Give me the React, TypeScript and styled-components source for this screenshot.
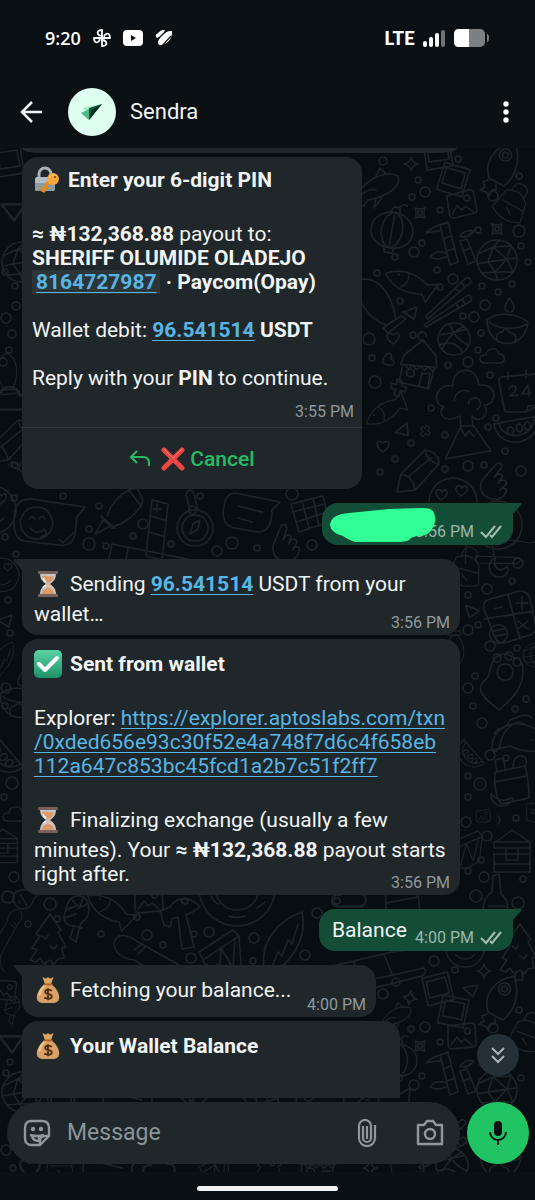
import React from "react";
import styled, { createGlobalStyle, css } from "styled-components";

const GlobalStyle = createGlobalStyle`
  * { box-sizing: border-box; }
  html, body { margin: 0; background: #0a1014; }
  body { font-family: Roboto, "Noto Sans", sans-serif; color: #f1f4f5; }
  button, input { font: inherit; color: inherit; background: none; border: 0; padding: 0; margin: 0; }
  button { cursor: pointer; display: flex; align-items: center; justify-content: center; }
  svg { display: block; }
`;

const Page = styled.div`
  display: flex;
  flex-direction: column;
  height: 100vh;
  background: #0a1014;
`;

const StatusBar = styled.div`
  display: flex;
  align-items: center;
  justify-content: space-between;
  height: 76px;
  flex: none;
  padding: 0 45px;
  color: #fff;
`;

const StatusGroup = styled.div<{ $gap: number }>`
  display: flex;
  align-items: center;
  gap: ${(p) => p.$gap}px;
`;

const Clock = styled.span`
  font: 600 18px/24px "Open Sans", sans-serif;
`;

const Network = styled.span`
  font: 900 19px/24px Lato, sans-serif;
`;

const Header = styled.header`
  display: flex;
  align-items: center;
  height: 72px;
  flex: none;
  padding: 0 17px 0 20px;
`;

const Avatar = styled.div`
  width: 48px;
  height: 48px;
  margin: 0 14px 0 24px;
  border-radius: 50%;
  background: #dffff0;
  overflow: hidden;
`;

const ContactName = styled.h1`
  flex: 1;
  margin: 0;
  font-size: 22px;
  line-height: 28px;
  font-weight: 400;
`;

const Chat = styled.main`
  position: relative;
  display: flex;
  flex-direction: column;
  flex: 1;
  min-height: 0;
`;

const WallpaperSvg = styled.svg`
  position: absolute;
  inset: 0;
  width: 100%;
  height: 100%;
`;

const MessageList = styled.div`
  position: relative;
  display: flex;
  flex-direction: column;
  align-items: flex-start;
  flex: 1;
  min-height: 0;
  padding: 0 22px;
  overflow-y: auto;
  scrollbar-width: none;
`;

const Earlier = styled.div`
  flex: none;
  width: 435px;
  max-width: 100%;
  height: 5px;
  border-radius: 0 0 16px 16px / 0 0 5px 5px;
  background: #1f272a;
`;

const BubbleBox = styled.article<{ $out?: boolean; $width: number; $grouped?: boolean; $tail?: boolean }>`
  position: relative;
  flex: none;
  width: ${(p) => p.$width}px;
  max-width: 100%;
  margin-top: ${(p) => (p.$grouped ? 4 : 14)}px;
  border-radius: 16px;
  background: #1f272a;
  font-size: 21px;
  line-height: 24px;
  ${(p) => p.$tail && !p.$out && css`border-top-left-radius: 0;`}
  ${(p) =>
    p.$out &&
    css`
      align-self: flex-end;
      background: #144d37;
      border-top-right-radius: 0;
    `}
`;

const TailSvg = styled.svg<{ $out?: boolean }>`
  position: absolute;
  top: 0;
  ${(p) => (p.$out ? "right: -9px;" : "left: -9px;")}
`;

const Content = styled.div`
  display: grid;
  padding: 7px 10px 2px 12px;
  > * { grid-area: 1 / 1; }
`;

const Body = styled.div`
  padding-bottom: 7px;
`;

const Stacked = styled.div`
  display: flex;
  flex-direction: column;
  padding: 5px 8px 5px 10px;
`;

const Line = styled.p`
  margin: 0;
  min-height: 24px;
  overflow-wrap: anywhere;
`;

const OutRow = styled.div`
  display: flex;
  align-items: center;
  justify-content: flex-end;
  height: 42px;
  padding: 0 11px 0 13px;
`;

const OutText = styled.span`
  flex: 1;
`;

const Time = styled.time<{ $spaced?: boolean }>`
  align-self: end;
  justify-self: end;
  color: #8f999d;
  font-size: 16px;
  line-height: 20px;
  ${(p) => p.$spaced && "margin-top: 12px;"}
`;

const OutMeta = styled.span`
  display: flex;
  align-items: center;
  gap: 6px;
  padding-top: 15px;
  time { color: #9bb8ac; }
`;

const Link = styled.a`
  color: #57b6e6;
  text-decoration: underline;
  text-decoration-thickness: 1px;
  text-underline-offset: 3px;
`;

const Chip = styled.span`
  padding: 0 4px;
  background: #2c3538;
`;

const EmojiSlot = styled.span<{ $gap: number }>`
  display: inline-flex;
  align-items: center;
  width: 28px;
  height: 36px;
  margin-right: ${(p) => p.$gap}px;
  vertical-align: -7px;
`;

const CancelButton = styled.button`
  width: 100%;
  height: 62px;
  gap: 5px;
  border-top: 1px solid #323b3e;
  color: #25bd63;
  font-size: 21px;
  font-weight: 500;
  svg:first-child { margin-right: 5px; }
`;

const Scribble = styled.svg`
  position: absolute;
  left: 7px;
  top: 4px;
`;

const ComposerRow = styled.form`
  position: relative;
  display: flex;
  gap: 7px;
  flex: none;
  padding: 4px 6px 8px 7px;
`;

const Pill = styled.div`
  display: flex;
  align-items: center;
  flex: 1;
  min-width: 0;
  height: 62px;
  padding: 0 16px;
  border-radius: 31px;
  background: #1f272a;
  color: #8f999d;
`;

const MessageInput = styled.input`
  flex: 1;
  min-width: 0;
  margin: 0 16px;
  font-size: 23px;
  line-height: 28px;
  outline: 0;
  &::placeholder { color: #8b9599; opacity: 1; }
`;

const PillButton = styled.button<{ $spaced?: boolean }>`
  width: 28px;
  height: 28px;
  flex: none;
  margin-right: ${(p) => (p.$spaced ? 35 : 0)}px;
`;

const MicButton = styled.button`
  width: 62px;
  height: 62px;
  flex: none;
  border-radius: 50%;
  background: #21c463;
`;

const JumpButton = styled.button`
  position: absolute;
  right: 16px;
  bottom: 96px;
  width: 42px;
  height: 42px;
  border-radius: 50%;
  background: #242f36;
`;

const GestureArea = styled.footer`
  display: flex;
  justify-content: center;
  flex: none;
  height: 28px;
  padding-top: 14px;
`;

const GestureBar = styled.div`
  width: 141px;
  height: 5px;
  border-radius: 3px;
  background: #f2f4f5;
`;

/* ---------- wallpaper ---------- */

const shapes: Record<string, string> = {
  rocket: "M-13 12C-18-4-8-20 13-24C20-4 12 12 2 20ZM-13 12L2 20M-14 14l-5 2 2 5-5 3 6 2 3 4 3-6 4 0 0-6M3-17a6 6 0 1 0 1 0M3-14a3 3 0 1 0 1 0",
  photo: "M-14-13L12-17L16 11L-10 15ZM-10-9L9-12L12 4L-8 7Z",
  image: "M-13-10L10-13Q14-13 14-9L15 7Q15 11 11 11L-9 13Q-12 13-13 9ZM-10 9l6-8 4 5 4-3 7 6M6-8a3 3 0 1 0 1 0",
  globe: "M0-20a20 20 0 1 0 .1 0M-19-6L-4-13L14-14M-20 4L-9 2L10-1L20-2M-15 13L-2 12L16 12M-4-13L-9 2L-2 12L1 20M3-20L-4-13M14-14L10-1L16 12M-4-13L10-1L-2 12",
  ball: "M0-16a16 16 0 1 0 .1 0M-15-4Q0-6 13-10M-12 10Q-4-6 10-13M-4-15Q0 0 15 6M-14 6Q0 0 9 13",
  sticks: "M-24 18L16-20Q21-21 21-16L-22 21ZM-26 27L18-3Q22-2 21 3L-24 29ZM5-10l5 4M11-16l4 5M6 5l3 5M12 1l3 5",
  volcano: "M-22 44L-5 12H8L24 38ZM-5 12V2M7 12V2M-6 2C-24 10-28-6-20-8C-36-14-24-34-11-28C-10-50 16-48 15-28C34-30 34-8 20-8C26 6 10 10 7 2M-10-14a10 10 0 0 1 15-8M4-10a6 6 0 1 1 8 6M-5 14l4 8 4-5 5 6",
  calendar: "M-17-15L16-18Q19-18 19-15L21 13L8 20L-10 20Q-14 20-14 16L-19-10Q-20-14-17-15M-10-20v7M8-22v7M8 20L10 14L21 13M-9-3q4-6 7-1q0 4-6 8l8-1M11 4l-1-11-6 9 9-1",
  house: "M-20 4L-17-6L0-22L14-8L16 4ZM-18 4L-20 22L10 26L14 4M-10 8a4 4 0 1 0 1 0M0 24L2 11h8l-1 14M-1-22a4 4 0 1 1 4-4M-16 4l4 4 4-4 4 4 4-4 4 4 4-4 4 4 4-4",
  lantern: "M0-18C-28-16-28 18 0 18C28 18 28-16 0-18ZM0-18C-14-14-14 14 0 18M0-18C14-14 14 14 0 18M0-18V18M-5 18l1 5h8l1-5M-4-18l2-5h6l1 5M3-23q4-6 8-3",
  bowl: "M-20-6C-20 24 18 26 21-4C8-14-10-14-20-6ZM-18-4C-8 4 10 4 20-2M-9 16q-4-9 4-10q4-6 8 1q8 0 5 10M1-14C-6-18 0-22 2-28C8-22 8-16 4-14",
  cloud: "M-9 6c-6-1-5-9 2-8c1-8 12-8 13-1c7-1 7 9 1 9Z",
  star: "M0-7Q1-1 7 0Q1 1 0 7Q-1 1-7 0Q-1-1 0-7Z",
  spark: "M-5-5Q0-3 5-5Q3 0 5 5Q0 3-5 5Q-3 0-5-5ZM-2-2h4v4h-4Z",
  tri: "M-7 0L7-5L4 7Z",
  heart: "M0 6C-10-1-6-8 0-3C6-8 10-1 0 6Z",
  cross: "M-3-8h5l1 5h5v5h-5v6h-5v-6h-5v-5h5Z",
  melon: "M-22-6L22-14C26 14-16 24-22-6ZM-17-6C-12 12 18 8 18-12M-6-3a3 4 0 1 0 1 0M3-6a3 4 0 1 0 1 0M11-8a3 4 0 1 0 1 0",
  pencil: "M-20 22L-16 4L8-20Q22-18 22-6L-2 20ZM-16 4Q-4 6-2 20M8-20Q10-8 22-6M-8 6L14-12",
  bamboo: "M-12-20l8-3 10 40-8 3ZM-9-6l8-3M-5 6l8-3M8-4l7-2 9 22-8 3ZM11 6l7-3M-12-20q-8 2-14 8q8-2 14-2M8-8q4-8 14-6q-4 6-12 6M-6 8q-10-4-16 4q8 4 16 0M22-14l-8 6",
  whale: "M-26 14C-20-10 4-20 18-14C22 0 0 8-12 10L-16 16ZM-4-14l4-8 6 6M-4 8l-2 10 8-10M-18 4q8-6 14-4",
  surf: "M0-26C20-26 28 0 26 20L16 24C6 18-14-4 0-26M12 26l20-8 4 4-20 10Z",
  smile: "M-34-14Q-32-26-18-26L36-18L28-8L26 8Q24 22 10 20L-26 16Q-38 12-34-14ZM-13-18a16 16 0 1 0 1 0M-20-6q3-5 6 0M-10-6q3-5 6 0M-19 3q8 8 14 1l3 5-6 3M10 14l4 4 8-8M16 16l8-8",
  pen: "M-24 20L-16 6L-8 12ZM-16 6l-2-4 14 12-4 0M-12 2Q-6-16 10-24L22-8Q10 8-4 12M10-24l8-2 6 12-2 6",
  cardgrid: "M-10-28L6-24L0 32L-16 28ZM-12-12L3-8M-14 4L1 8M-5-24v8M-9-19h8M-50 16L40 34M-50 16l-4 20M-34 20l-3 18M20 30l-2 8",
  compass: "M0-14a18 18 0 1 0 .1 0M0-9a13 13 0 1 0 .1 0M-5 10L-2 0L5-4L3 5ZM-5-14l-4-16q4-8 8 0l4 16M-3-18a4 4 0 1 0 1 0",
  note: "M-26-8Q-24-24-10-20L30-12L22-4Q22 18 8 18L-16 14Q-30 10-26-8M-12-8L12-2M-12 4L2 8",
  choc: "M-18-10L14-18L20 8L-10 18ZM-17-2L16-10M-12 8L18-2M-7-13L0 14M4-16L10 12",
  hand: "M-12 4L-4-16Q0-20 2-14L-2-2M-2-2q4-8 8-4l-2 8M4 0q6-6 8 0l-4 8M8 6q8-4 6 4C10 24-14 22-12 4",
  hearts: "M0-24a24 24 0 1 0 .1 0M-12-2C-22-10-14-16-11-10C-6-16-2-8-12-2ZM8-6C-2-14 6-20 9-14C14-20 18-12 8-6ZM-12 8q12 12 24 0",
  moon: "M2-10C-10-10-12 8 2 10Q10 10 10 2C0 6-4-2 2-10Z",
  calc: "M-18-18L12-26Q20-26 22-18L28 10Q28 16 22 18L-4 26Q-12 26-14 18L-24-8Q-26-16-18-18ZM0-22L12 22M-24 2L26-6M-14-8l8-2M8-14h12M14-20v12M10 4l10 8M20 4l-10 8M-10 8a9 9 0 1 0 1 0M-14 14l10-2M-12 19l10-2",
  ray: "M0 28C-18 14-22 8-16 0C-8-4-10-16-4-24Q6-32 14-24Q24-26 24-10C24 6 12 18 0 28ZM6-18a8 8 0 1 0 .1 0M-2-28a4 4 0 1 0 .1 0M10-30a4 4 0 1 0 .1 0M18-24a4 4 0 1 0 .1 0",
  taco: "M-26 12C-28-16 10-26 30 4L26 12Q8 16-8 8ZM-26 12q4 4 8-4C-16-10 0-20 6-14M14 2h1M18 8h1M22 2h1M-24-4q4-6 8-6t8-8q6-2 10-4q8-2 12 2",
  pack: "M-14-12L16-18Q20-4 20 14L-8 20Q-16 8-14-12ZM-14-2L18-8M-12-12l-2-12 8-2 2 10M4-16q0-12 8-12t4 12M-18 14q8 14 20 4q4-4 0-4q-10 6-20-4Z",
  cabin: "M-16-8L0-20L18-8M-18-8h36v6h-36ZM-18-2h36v6h-36M-18 4v10h36V4M-18 14v8h36v-8M-6-2h12v12H-6ZM-14-26q4-4 0-8",
  tree: "M0-26L-14-6l4 2L-18 8l5 2-7 10 6 2 4-4 4 6 6-4 4 4 4-5 6-1L12 8l4-1L8-8l3-2ZM-4 22l-1 8h8l-1-8M-8-4l4 3 2-4M0 6l4 3 3-4",
  shrimp: "M-20-8C-18-26 0-26 2-14C6 2-6 2-6 8L-10 24L-16 20L-12 8C-22 8-24 0-20-8M-20-8l10-4M-22 0l12-4M-14-18l6 6M-2-22l-4 10M2-14l-10 4M-12 8l8 2",
  hammer: "M-20-14L-16 0L-10 2L-8-6L-2-8L2 24L14 22L6-10L14-14L20-18C10-30-4-28-10-18Z",
  board: "M-34-8C-32-20-20-18-10-10L40 18Q60 24 70 12M-34-8Q-32 6-14 8L30 34M-10 2l8-8M-14-2l8-6",
  drum: "M-22 2L12-20L18-14L-18 10ZM-18 10L-10 28M18-14L20 16M-14 14L-2 26L0-2L12 18L14-10M-10 28q16 6 30-12",
  leaf: "M-20 26C-24 0-6-22 18-30C24-2 6 22-16 34ZM-16 34L-6 10L-2 14L4-2L8 2L14-18",
  table: "M-60 6L8-10M8-10L50-16L58-22M-30 0l6 30M0-8l8 20M-14 18L40 6Q44 10 38 14L-10 26Z",
  plate: "M0-38a38 38 0 1 0 .1 0M0-22a22 22 0 1 0 .1 0M-26 8q4 8 8 8M-8 28q8 3 16 0M20 20l8-6",
  fish: "M-26 4Q-8-16 20-8L30-14L28 10L20 4Q-6 18-26 4M-14-2h2M-4-9q6 8 0 18",
  flask: "M-4-24L2-26L4-6Q16 4 6 16Q-8 22-14 10Q-14-2-5-8ZM-8 6h16M-2 12h3",
  kettle: "M-16-12Q0-24 14-10L20 14Q0 26-20 14ZM-10-16q0-16 14-12q8 4 4 14M-14 0h30M-4 6l8 6",
};

type Doodle = [name: string, x: number, y: number, rotate?: number, scale?: number];

const doodles: Doodle[] = [
  ["photo", 437, 155], ["photo", 452, 180, 25], ["rocket", 502, 166], ["image", 461, 204, -8], ["whale", 380, 190, 0, 1],
  ["lantern", 392, 230, 10], ["bamboo", 452, 245], ["globe", 497, 260], ["star", 411, 164], ["spark", 420, 213], ["spark", 497, 229],
  ["kettle", 512, 205, 30, 0.8], ["surf", 366, 305, -12, 1], ["fish", 408, 282, 30, 0.9], ["sticks", 450, 298], ["tri", 410, 312],
  ["bowl", 507, 326], ["ball", 454, 339], ["heart", 393, 338], ["house", 421, 362, 5], ["cloud", 493, 357], ["heart", 388, 360, 70],
  ["volcano", 465, 414, -3], ["cross", 398, 388, 15], ["calendar", 518, 392], ["melon", 516, 430], ["fish", 384, 412, -25, 0.8],
  ["tri", 402, 430, -20], ["heart", 383, 446], ["pencil", 417, 470], ["hand", 495, 480, 20], ["cross", 425, 431, 40, 0.7],
  ["smile", 49, 525], ["pen", 119, 514], ["cardgrid", 162, 528], ["compass", 195, 524], ["note", 250, 514], ["choc", 309, 514],
  ["hand", 285, 542], ["hearts", 453, 502], ["table", 490, 545, 15, 0.8], ["hearts", 498, 525],
  ["kettle", 466, 570, 15, 0.8], ["moon", 497, 568, -20], ["calc", 508, 617], ["tri", 471, 610, 40], ["surf", 462, 652, 200, 0.6],
  ["ray", 499, 682], ["taco", 518, 738], ["melon", 468, 755, 60, 0.7], ["pack", 509, 784], ["image", 483, 816, 0, 0.5], ["cabin", 512, 850],
  ["flask", 497, 900], ["drum", 466, 845, 10, 0.8], ["calendar", 535, 812, 10, 0.5], ["globe", 535, 655, 0, 0.6],
  ["board", 12, 930, 90, 0.6], ["tree", 50, 940], ["shrimp", 86, 918], ["flask", 28, 898, 60, 0.8], ["fish", 108, 908, 40, 0.9],
  ["image", 148, 900, 0, 1], ["hammer", 180, 925], ["board", 148, 952], ["drum", 221, 950], ["plate", 237, 888], ["leaf", 284, 942],
  ["pack", 400, 905], ["cloud", 350, 898, 0, 1.4], ["table", 384, 962], ["hearts", 465, 948, 0, 0.8], ["tree", 520, 950],
  ["star", 484, 971], ["star", 410, 998, 10], ["photo", 437, 990, -5], ["photo", 452, 1012, 20], ["rocket", 501, 1000],
  ["tri", 470, 989, 10], ["whale", 398, 1018, 0, 0.7], ["image", 461, 1036], ["spark", 420, 1046], ["lantern", 398, 1060, 0, 0.9],
  ["bamboo", 452, 1075], ["globe", 497, 1090], ["kettle", 527, 1035, 20, 0.8], ["sticks", 445, 1140], ["bowl", 500, 1160], ["ball", 452, 1165],
  ["photo", 8, 162], ["tri", 12, 208, 20, 1.6], ["globe", 22, 262], ["surf", 0, 370, 20, 0.7], ["cloud", 10, 400, 0, 1.6], ["pencil", 10, 440],
  ["shrimp", 24, 475, 100, 0.7], ["hearts", -8, 510], ["hearts", 2, 575, 0, 0.7], ["tri", 5, 620], ["leaf", 2, 660, 0, 0.6],
  ["bowl", 20, 700], ["melon", 0, 755, 60], ["cloud", 16, 815], ["cabin", 3, 845, 0, 0.8], ["image", 4, 990, 10, 0.8], ["shrimp", 18, 1010, 0, 0.6],
  ["tri", 10, 1040, 20, 1.6], ["globe", 22, 1092], ["heart", 30, 1168, 0, 1.6], ["kettle", 60, 1166, 0, 0.7], ["note", 110, 1170],
  ["cloud", 160, 1168, 0, 1.3], ["drum", 215, 1166, 0, 0.7], ["tree", 270, 1160, 0, 0.7], ["house", 320, 1160], ["star", 370, 1168],
  ["calendar", 405, 1160, 0, 0.9], ["photo", 60, 1100], ["note", 130, 1102], ["bamboo", 200, 1102, 60], ["choc", 260, 1100], ["hearts", 320, 1104], ["fish", 380, 1102],
];

const bubbles: [number, number, number][] = [
  [383, 161, 4], [458, 159, 3], [418, 180, 3], [425, 192, 5], [519, 176, 3], [493, 196, 5], [412, 197, 3], [440, 210, 3], [478, 230, 3], [519, 231, 6],
  [422, 243, 3], [414, 252, 5], [395, 257, 3], [521, 246, 3], [528, 262, 3], [377, 273, 3], [437, 270, 3], [453, 279, 5], [482, 286, 3], [498, 292, 3],
  [440, 287, 3], [512, 284, 3], [400, 301, 3], [485, 305, 5], [463, 316, 3], [474, 317, 5], [481, 333, 3], [369, 339, 6], [413, 335, 3], [478, 350, 3],
  [448, 365, 3], [468, 362, 5], [372, 358, 3], [375, 382, 6], [490, 375, 3], [431, 408, 3], [496, 418, 3], [445, 435, 3], [488, 427, 3], [411, 443, 3],
  [505, 451, 3], [395, 459, 3], [380, 472, 3], [445, 469, 3], [468, 466, 5], [484, 465, 3], [521, 471, 5],
  [14, 498, 3], [63, 496, 3], [99, 506, 3], [143, 524, 5], [89, 529, 3], [133, 536, 3], [89, 544, 6], [106, 546, 3], [171, 544, 3], [200, 496, 3],
  [292, 494, 6], [217, 551, 5], [232, 543, 6], [257, 548, 3], [312, 545, 5], [5, 537, 3], [16, 554, 3],
  [518, 563, 5], [487, 589, 5], [512, 581, 3], [468, 595, 3], [468, 630, 5], [478, 625, 3], [490, 646, 5], [517, 648, 3], [468, 688, 5], [475, 676, 3],
  [473, 706, 3], [526, 699, 3], [515, 709, 3], [482, 723, 5], [490, 755, 5], [506, 758, 3], [480, 784, 6], [468, 776, 3], [468, 797, 3], [516, 818, 3],
  [466, 822, 5], [487, 836, 5], [481, 860, 3], [468, 871, 3], [484, 877, 5], [523, 879, 3], [476, 896, 6], [518, 903, 6],
  [8, 897, 6], [50, 904, 6], [28, 924, 3], [57, 919, 3], [101, 934, 3], [137, 917, 3], [147, 935, 5], [163, 945, 3], [185, 901, 3], [194, 934, 3],
  [209, 932, 5], [191, 958, 5], [254, 938, 5], [253, 961, 3], [305, 955, 5], [317, 913, 5], [337, 901, 3], [434, 961, 5], [455, 970, 3], [396, 982, 4],
  [383, 994, 5], [519, 1010, 3], [425, 1027, 5], [411, 1029, 3], [493, 1028, 5], [440, 1042, 3], [422, 1076, 3], [414, 1085, 5], [521, 1078, 3],
  [15, 286, 3], [5, 272, 3], [16, 306, 4], [6, 318, 5], [12, 334, 4], [9, 350, 3], [3, 362, 4], [15, 465, 3], [8, 600, 3], [10, 633, 3], [6, 688, 5],
  [5, 706, 3], [12, 783, 6], [4, 797, 3], [14, 877, 5], [10, 1062, 3], [6, 1073, 3], [6, 1150, 5], [13, 1168, 3],
];

const Wallpaper = () => (
  <WallpaperSvg aria-hidden="true">
    <defs>
      <pattern id="doodles" width="535" height="1024" patternUnits="userSpaceOnUse">
        <g transform="translate(0 -148)" fill="none" stroke="#1d2428" strokeWidth="1.5" strokeLinejoin="round" strokeLinecap="round">
          {doodles.map(([name, x, y, r = 0, s = 1], i) => (
            <path key={i} d={shapes[name]} transform={`translate(${x} ${y}) rotate(${r}) scale(${s})`} />
          ))}
          {bubbles.map(([x, y, r], i) => (
            <circle key={i} cx={x} cy={y} r={r} />
          ))}
        </g>
      </pattern>
    </defs>
    <rect width="100%" height="100%" fill="#080d11" />
    <rect width="100%" height="100%" fill="url(#doodles)" />
  </WallpaperSvg>
);

/* ---------- emoji ---------- */

const LockEmoji = () => (
  <svg width="28" height="28" viewBox="0 0 28 28" aria-label="lock with key">
    <path d="M7 13V8a6 6 0 0 1 12 0v5" fill="none" stroke="#a9b4b8" strokeWidth="3" />
    <rect x="3" y="11" width="20" height="14" rx="2" fill="#b4bdc2" />
    <path d="M3 17h20v6q0 2-2 2H5q-2 0-2-2Z" fill="#8f9aa1" />
    <path d="M20 12L9 25M13 20l3 3M10 23l3 3" stroke="#e08a22" strokeWidth="3" />
    <circle cx="21" cy="13" r="6" fill="#f4a83a" />
    <circle cx="23" cy="11" r="1" fill="#6b4210" />
    <path d="M17 12q2-4 6-3" stroke="#ffd47a" fill="none" />
  </svg>
);

const HourglassEmoji = () => (
  <svg width="28" height="28" viewBox="0 0 28 28" aria-label="hourglass">
    <path d="M6 3h16c0 6-2 8-6 11 4 3 6 5 6 11H6c0-6 2-8 6-11C8 11 6 9 6 3Z" fill="#c9c4c4" />
    <path d="M8 6c4-2 8 2 12 0-1 4-3 6-6 7-3-1-5-3-6-7Z" fill="#dc9a6b" />
    <path d="M13 13h2v7h-2Z" fill="#eab48c" />
    <path d="M8 24c0-4 3-6 6-6s6 2 6 6Z" fill="#dc9a6b" />
    <path d="M9 17q2-1 3-2M9 8q1 3 3 4" stroke="#fff" strokeWidth="1.5" fill="none" />
    <rect x="4" y="1" width="20" height="3" rx="1" fill="#75615d" />
    <rect x="4" y="24" width="20" height="3" rx="1" fill="#75615d" />
  </svg>
);

const CheckEmoji = () => (
  <svg width="28" height="28" viewBox="0 0 28 28" aria-label="check mark">
    <defs>
      <linearGradient id="checkFill" x2="0" y2="1">
        <stop stopColor="#5bd3a5" />
        <stop offset="1" stopColor="#1d9168" />
      </linearGradient>
    </defs>
    <rect width="28" height="28" rx="5" fill="url(#checkFill)" />
    <path d="M5 14l6 6L23 8" fill="none" stroke="#fff" strokeWidth="4" strokeLinecap="round" strokeLinejoin="round" />
  </svg>
);

const MoneyEmoji = () => (
  <svg width="28" height="28" viewBox="0 0 28 30" aria-label="money bag">
    <path d="M8 1l4 2 2-2 2 2 4-2-3 8h-6Z" fill="#dfa763" />
    <path d="M10 9h8c5 4 8 9 8 14 0 4-3 6-7 6H9c-4 0-7-2-7-6 0-5 3-10 8-14Z" fill="#d9a066" />
    <path d="M5 20c1-5 3-8 6-10" stroke="#f3c990" strokeWidth="2" fill="none" strokeLinecap="round" />
    <rect x="9" y="8" width="10" height="2" rx="1" fill="#a8622b" />
    <path d="M18 16c-2-2-7-2-7 1 0 4 7 1 7 5 0 3-5 3-8 1M14 13v13" fill="none" stroke="#4a2f12" strokeWidth="2" />
  </svg>
);

const CrossEmoji = () => (
  <svg width="24" height="24" viewBox="0 0 24 24" aria-hidden="true">
    <path d="M3 3l18 18M21 3L3 21" stroke="#e8483f" strokeWidth="5" strokeLinecap="round" />
    <path d="M3 2l9 9 9-9" stroke="#f47a6c" strokeWidth="1" fill="none" />
  </svg>
);

const Emoji = ({ gap = 8, children }: { gap?: number; children: React.ReactNode }) => (
  <EmojiSlot $gap={gap}>{children}</EmojiSlot>
);

/* ---------- bubbles ---------- */

const Tail = ({ out }: { out?: boolean }) => (
  <TailSvg $out={out} width="10" height="12" viewBox="0 0 10 12" aria-hidden="true">
    {out ? <path d="M0 0h8q3 1 0 3L0 12Z" fill="#144d37" /> : <path d="M10 0H2q-3 1 0 3l8 9Z" fill="#1f272a" />}
  </TailSvg>
);

const DoubleCheck = () => (
  <svg width="22" height="14" viewBox="0 0 22 14" fill="none" stroke="#a3beb3" strokeWidth="2" aria-label="Delivered">
    <path d="M1 7l5 5L15 1M10 10l2 2L21 1" />
  </svg>
);

const Incoming = ({ width, grouped, tail, time, children }: { width: number; grouped?: boolean; tail?: boolean; time?: string; children: React.ReactNode }) => (
  <BubbleBox $width={width} $grouped={grouped} $tail={tail}>
    {tail && <Tail />}
    <Content>
      <Body>{children}</Body>
      {time && <Time>{time}</Time>}
    </Content>
  </BubbleBox>
);

const Outgoing = ({ width, time, text, children }: { width: number; time: string; text?: string; children?: React.ReactNode }) => (
  <BubbleBox $out $width={width}>
    <Tail out />
    <OutRow>
      {text && <OutText>{text}</OutText>}
      <OutMeta>
        <Time>{time}</Time>
        <DoubleCheck />
      </OutMeta>
    </OutRow>
    {children}
  </BubbleBox>
);

export default function App() {
  return (
    <>
      <GlobalStyle />
      <Page>
        <StatusBar>
          <StatusGroup $gap={12}>
            <Clock>9:20</Clock>
            <svg width="18" height="18" viewBox="0 0 18 18" fill="none" stroke="#fff" strokeWidth="1.8" strokeLinejoin="round" strokeLinecap="round">
              <path d="M9 9V1C5 1 4 3 5 5q1 2 4 2M9 9h8c0-4-2-5-4-4q-2 1-2 4M9 9v8c4 0 5-2 4-4q-1-2-4-2M9 9H1c0 4 2 5 4 4q2-1 2-4" />
            </svg>
            <svg width="20" height="16" viewBox="0 0 20 16">
              <rect width="20" height="16" rx="4" fill="#fff" />
              <path d="M8 5l5 3-5 3Z" fill="#0a1014" />
            </svg>
            <svg width="18" height="16" viewBox="0 0 18 16" fill="#fff">
              <path d="M17 1C11 0 4 7 3 12q0 4 4 3C13 14 18 7 17 1Z" />
              <path d="M10 0Q8 6 2 8-1 5 3 3 7-1 10 0Z" />
              <path d="M12 0L1 11M16 6L7 16" stroke="#0a1014" strokeWidth="1.2" />
            </svg>
          </StatusGroup>
          <StatusGroup $gap={8}>
            <Network>LTE</Network>
            <svg width="23" height="17" viewBox="0 0 23 17" fill="#fff">
              <rect x="0" y="11" width="4" height="6" rx="2" />
              <rect x="6" y="7" width="4" height="10" rx="2" />
              <rect x="12" y="3" width="4" height="14" rx="2" />
              <rect x="18" y="0" width="4" height="17" rx="2" fill="#6f7376" />
            </svg>
            <svg width="36" height="18" viewBox="0 0 36 18">
              <rect width="31" height="18" rx="5" fill="#7c8083" />
              <path d="M5 0h10v18H5q-5 0-5-5V5q0-5 5-5Z" fill="#fff" />
              <path d="M33 5q2 0 2 4t-2 4Z" fill="#7c8083" />
            </svg>
          </StatusGroup>
        </StatusBar>

        <Header>
          <button type="button" aria-label="Back">
            <svg width="24" height="24" viewBox="0 0 24 24" fill="none" stroke="#f1f4f5" strokeWidth="2.5">
              <path d="M22 12H3M12 2L2 12l10 10" />
            </svg>
          </button>
          <Avatar>
            <svg width="48" height="48" viewBox="0 0 48 48">
              <path d="M34 16L14 20l6 4Z" fill="#a9ecc9" />
              <path d="M21 21l-8 4 8 7Z" fill="#4fb98a" />
              <path d="M34 16L21 20v12Z" fill="#0e5a3b" />
              <path d="M34 16L21 32l3-10Z" fill="#06301f" />
            </svg>
          </Avatar>
          <ContactName>Sendra</ContactName>
          <button type="button" aria-label="More options">
            <svg width="24" height="24" viewBox="0 0 24 24" fill="#fff">
              <circle cx="12" cy="4" r="2.7" />
              <circle cx="12" cy="12" r="2.7" />
              <circle cx="12" cy="20" r="2.7" />
            </svg>
          </button>
        </Header>

        <Chat>
          <Wallpaper />
          <MessageList>
            <Earlier />
            <BubbleBox $width={340} $grouped>
              <Stacked>
                <Line><Emoji><LockEmoji /></Emoji><b>Enter your 6-digit PIN</b></Line>
                <Line />
                <Line><b>≈ ₦132,368.88</b> payout to:</Line>
                <Line><b>SHERIFF OLUMIDE OLADEJO</b></Line>
                <Line><Chip><Link href="tel:8164727987"><b>8164727987</b></Link></Chip> <b>· Paycom(Opay)</b></Line>
                <Line />
                <Line>Wallet debit: <Link href="tel:96541514"><b>96.541514</b></Link> <b>USDT</b></Line>
                <Line />
                <Line>Reply with your <b>PIN</b> to continue.</Line>
                <Time $spaced>3:55 PM</Time>
              </Stacked>
              <CancelButton type="button">
                <svg width="22" height="18" viewBox="0 0 22 18" fill="none" stroke="currentColor" strokeWidth="2">
                  <path d="M8 1L2 7l6 6M2 7h12q6 0 6 6v3" />
                </svg>
                <CrossEmoji />
                Cancel
              </CancelButton>
            </BubbleBox>

            <Outgoing width={191} time="3:56 PM">
              <Scribble width="108" height="36" viewBox="0 0 108 36" aria-hidden="true">
                <path d="M1 18C2 10 8 7 20 6L60 2 92 1Q106 0 106 10q1 8-4 13-2 6-14 6-6 1-8 4-4 2-12 2H26q-8-3-12-6Q2 26 1 18Z" fill="#2fff94" />
              </Scribble>
            </Outgoing>

            <Incoming width={438} tail time="3:56 PM">
              <Line><Emoji><HourglassEmoji /></Emoji>Sending <Link href="tel:96541514"><b>96.541514</b></Link> USDT from your wallet…</Line>
            </Incoming>

            <Incoming width={438} grouped time="3:56 PM">
              <Line><Emoji><CheckEmoji /></Emoji><b>Sent from wallet</b></Line>
              <Line />
              <Line>
                Explorer:{" "}
                <Link href="https://explorer.aptoslabs.com/txn/0xded656e93c30f52e4a748f7d6c4f658eb112a647c853bc45fcd1a2b7c51f2ff7">
                  https://explorer.aptoslabs.com/txn<wbr />/0xded656e93c30f52e4a748f7d6c4f658eb<wbr />112a647c853bc45fcd1a2b7c51f2ff7
                </Link>
              </Line>
              <Line />
              <Line><Emoji><HourglassEmoji /></Emoji>Finalizing exchange (usually a few minutes). Your <b>≈ ₦132,368.88</b> payout starts right after.</Line>
            </Incoming>

            <Outgoing width={194} text="Balance" time="4:00 PM" />

            <Incoming width={354} tail time="4:00 PM">
              <Line><Emoji><MoneyEmoji /></Emoji>Fetching your balance...</Line>
            </Incoming>

            <Incoming width={378} grouped>
              <Line><Emoji><MoneyEmoji /></Emoji><b>Your Wallet Balance</b></Line>
              <Line />
              <Line />
            </Incoming>
          </MessageList>

          <ComposerRow onSubmit={(e) => e.preventDefault()}>
            <Pill>
              <PillButton type="button" aria-label="Stickers">
                <svg width="28" height="28" viewBox="0 0 28 28" fill="none" stroke="currentColor" strokeWidth="2.4" strokeLinejoin="round">
                  <path d="M9 2h10q7 0 7 7v8l-9 9H9q-7 0-7-7V9q0-7 7-7ZM26 17h-4q-5 0-5 5v4" />
                  <path d="M7 16q7 2 14 0M9 17q1 5 7 5v-5" />
                  <circle cx="10" cy="10" r="1" fill="currentColor" />
                  <circle cx="18" cy="10" r="1" fill="currentColor" />
                </svg>
              </PillButton>
              <MessageInput aria-label="Message" placeholder="Message" />
              <PillButton type="button" aria-label="Attach" $spaced>
                <svg width="28" height="28" viewBox="0 0 28 28" fill="none" stroke="currentColor" strokeWidth="2.2">
                  <path d="M22 6v13a8 8 0 0 1-16 0V7a5 5 0 0 1 12 0v12a4 4 0 0 1-8 0V7M14 7v13" />
                </svg>
              </PillButton>
              <PillButton type="button" aria-label="Camera">
                <svg width="28" height="28" viewBox="0 0 28 28" fill="none" stroke="currentColor" strokeWidth="2.4" strokeLinejoin="round">
                  <path d="M2 6h6l3-4h6l3 4h6v19H2Z" />
                  <circle cx="14" cy="15" r="5" />
                </svg>
              </PillButton>
            </Pill>
            <MicButton type="button" aria-label="Record voice message">
              <svg width="24" height="28" viewBox="0 0 24 28" fill="none" stroke="#0a1014" strokeWidth="2">
                <rect x="8" y="2" width="8" height="15" rx="4" fill="#0a1014" stroke="none" />
                <path d="M4 13a8 8 0 0 0 16 0M12 21v5" />
              </svg>
            </MicButton>
          </ComposerRow>

          <JumpButton type="button" aria-label="Jump to latest">
            <svg width="18" height="20" viewBox="0 0 18 20" fill="none" stroke="#aab4b9" strokeWidth="2">
              <path d="M3 3l6 6 6-6M3 11l6 6 6-6" />
            </svg>
          </JumpButton>
        </Chat>

        <GestureArea>
          <GestureBar />
        </GestureArea>
      </Page>
    </>
  );
}
